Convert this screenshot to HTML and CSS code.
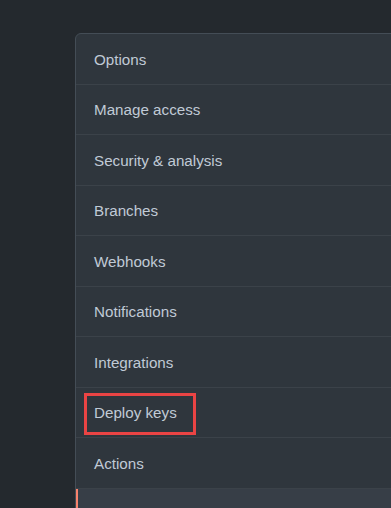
FILE: index.html
```html
<!DOCTYPE html>
<html lang="en">
<head>
    <meta charset="UTF-8">
    <meta name="viewport" content="width=device-width, initial-scale=1.0">
    <title>Settings menu</title>
    <link rel="stylesheet" href="styles.css">
</head>
<body>
    <!-- Repository settings menu -->
    <nav class="menu">
        <a href="#" class="menu-item">Options</a>
        <a href="#" class="menu-item">Manage access</a>
        <a href="#" class="menu-item">Security &amp; analysis</a>
        <a href="#" class="menu-item">Branches</a>
        <a href="#" class="menu-item">Webhooks</a>
        <a href="#" class="menu-item">Notifications</a>
        <a href="#" class="menu-item">Integrations</a>
        <a href="#" class="menu-item">
            Deploy keys
            <span class="highlight-box"></span>
        </a>
        <a href="#" class="menu-item">Actions</a>
        <a href="#" class="menu-item selected"></a>
    </nav>
</body>
</html>
```

FILE: styles.css
```css
* {
    margin: 0;
    padding: 0;
    box-sizing: border-box;
}

body {
    font-family: 'Liberation Sans', Arial, sans-serif;
    background: #24292e;
    overflow: hidden;
    height: 100vh;
}

.menu {
    margin: 33px 0 0 75px;
    width: 340px;
    background: #2f363d;
    border: 1px solid #444d56;
    border-radius: 6px;
    display: flex;
    flex-direction: column;
}

.menu-item {
    position: relative;
    display: flex;
    align-items: center;
    height: 50.5px;
    padding: 1px 18px 0;
    border-bottom: 1px solid #3b4249;
    color: #c0cad6;
    font-size: 15.2px;
    text-decoration: none;
}

.menu-item.selected {
    background: #373e47;
    border-left: 2px solid #f9826c;
    padding-left: 16px;
}

/* Red annotation box */
.highlight-box {
    position: absolute;
    left: 8px;
    top: 5.5px;
    width: 112px;
    height: 42px;
    border: 3px solid #ea4444;
}
```
